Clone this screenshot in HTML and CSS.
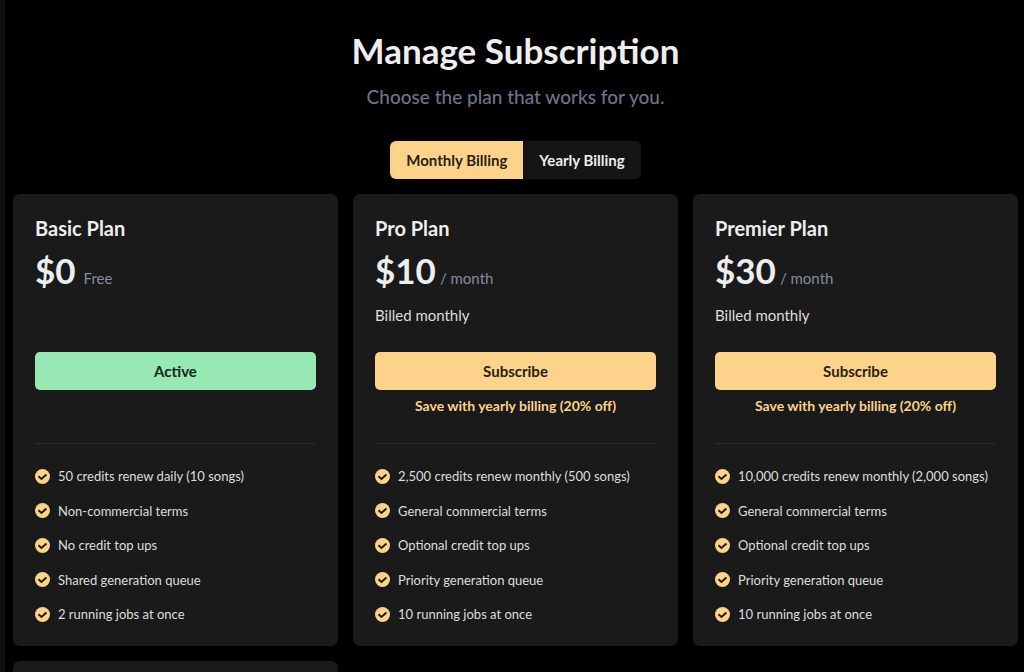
FILE: index.html
```
<!DOCTYPE html>
<html lang="en">
<head>
    <meta charset="UTF-8">
    <meta name="viewport" content="width=device-width, initial-scale=1.0">
    <title>Manage Subscription</title>
    <link rel="stylesheet" href="styles.css">
</head>
<body>
    <svg class="sprite" aria-hidden="true">
        <symbol id="check" viewBox="0 0 16 16">
            <circle cx="8" cy="8" r="8" fill="#fdd28b"/>
            <path d="M3.7 7.8 6.9 10.6 12.2 5.8" fill="none" stroke="#1a1a1a" stroke-width="2"/>
        </symbol>
    </svg>
    <main class="page">
        <header class="header">
            <h1>Manage Subscription</h1>
            <p>Choose the plan that works for you.</p>
            <div class="toggle">
                <button type="button" class="toggle-btn selected" aria-pressed="true">Monthly Billing</button>
                <button type="button" class="toggle-btn" aria-pressed="false">Yearly Billing</button>
            </div>
        </header>

        <div class="plans">
            <section class="card">
                <h2>Basic Plan</h2>
                <p class="price"><strong>$0</strong><span class="free">Free</span></p>
                <p class="billed"></p>
                <button type="button" class="btn btn-active">Active</button>
                <p class="save"></p>
                <ul class="features">
                    <li><svg class="icon"><use href="#check"/></svg>50 credits renew daily (10 songs)</li>
                    <li><svg class="icon"><use href="#check"/></svg>Non-commercial terms</li>
                    <li><svg class="icon"><use href="#check"/></svg>No credit top ups</li>
                    <li><svg class="icon"><use href="#check"/></svg>Shared generation queue</li>
                    <li><svg class="icon"><use href="#check"/></svg>2 running jobs at once</li>
                </ul>
            </section>

            <section class="card">
                <h2>Pro Plan</h2>
                <p class="price"><strong>$10</strong><span>/ month</span></p>
                <p class="billed">Billed monthly</p>
                <button type="button" class="btn">Subscribe</button>
                <p class="save">Save with yearly billing (20% off)</p>
                <ul class="features">
                    <li><svg class="icon"><use href="#check"/></svg>2,500 credits renew monthly (500 songs)</li>
                    <li><svg class="icon"><use href="#check"/></svg>General commercial terms</li>
                    <li><svg class="icon"><use href="#check"/></svg>Optional credit top ups</li>
                    <li><svg class="icon"><use href="#check"/></svg>Priority generation queue</li>
                    <li><svg class="icon"><use href="#check"/></svg>10 running jobs at once</li>
                </ul>
            </section>

            <section class="card">
                <h2>Premier Plan</h2>
                <p class="price"><strong>$30</strong><span>/ month</span></p>
                <p class="billed">Billed monthly</p>
                <button type="button" class="btn">Subscribe</button>
                <p class="save">Save with yearly billing (20% off)</p>
                <ul class="features">
                    <li><svg class="icon"><use href="#check"/></svg>10,000 credits renew monthly (2,000 songs)</li>
                    <li><svg class="icon"><use href="#check"/></svg>General commercial terms</li>
                    <li><svg class="icon"><use href="#check"/></svg>Optional credit top ups</li>
                    <li><svg class="icon"><use href="#check"/></svg>Priority generation queue</li>
                    <li><svg class="icon"><use href="#check"/></svg>10 running jobs at once</li>
                </ul>
            </section>

            <section class="card card-empty"></section>
        </div>
    </main>
</body>
</html>
```
FILE: styles.css
```
* {
    box-sizing: border-box;
}
body {
    margin: 0;
    background: #000;
    color: #eee;
    font-family: Lato, "Liberation Sans", sans-serif;
    font-size: 15px;
    line-height: 20px;
}
h1, h2, p, ul {
    margin: 0;
    padding: 0;
}
button {
    border: 0;
    font-family: inherit;
    cursor: pointer;
}
.sprite {
    display: none;
}
.page {
    height: 100vh;
    overflow: hidden;
    border-left: 5px solid #101010;
    padding: 30px 6px 0 8px;
}
.header {
    display: flex;
    flex-direction: column;
    align-items: center;
    margin-bottom: 15px;
}
.header h1 {
    font-size: 35px;
    font-weight: 700;
    line-height: 40px;
}
.header p {
    margin-top: 15px;
    color: #6b7588;
    font-size: 19px;
    font-weight: 500;
    line-height: 24px;
}
.toggle {
    display: flex;
    margin-top: 32px;
    border-radius: 6px;
    overflow: hidden;
}
.toggle-btn {
    height: 38px;
    padding: 0 16px;
    background: #151515;
    color: #eee;
    font-size: 15px;
    font-weight: 700;
}
.toggle-btn.selected {
    background: #fdd28b;
    color: #2a1f10;
}
.plans {
    display: grid;
    grid-template-columns: repeat(3, minmax(0, 1fr));
    gap: 15px;
}
.card {
    display: flex;
    flex-direction: column;
    padding: 22px;
    border-radius: 7px;
    background: #1a1a1a;
}
.card-empty {
    min-height: 452px;
}
.card h2 {
    font-size: 20px;
    font-weight: 700;
    line-height: 24px;
}
.price {
    display: flex;
    align-items: baseline;
    gap: 4px;
    margin-top: 8px;
    line-height: 20px;
    color: #858c9e;
}
.price strong {
    color: #eee;
    font-size: 35px;
    font-weight: 700;
    line-height: 44px;
}
.price .free {
    margin-left: 4px;
}
.billed {
    height: 24px;
    margin-top: 11px;
    color: #ddd;
    line-height: 24px;
}
.btn {
    height: 38px;
    margin-top: 25px;
    border-radius: 5px;
    background: #fdd28b;
    color: #2a1f10;
    font-size: 15px;
    font-weight: 700;
}
.btn-active {
    background: #98e8b4;
    color: #12291b;
}
.save {
    height: 20px;
    margin: 6px 0 27px;
    color: #fdd28b;
    font-size: 14px;
    font-weight: 700;
    text-align: center;
}
.features {
    display: flex;
    flex-direction: column;
    justify-content: space-between;
    height: 181px;
    padding-top: 22px;
    border-top: 1px solid #2a2a2a;
    list-style: none;
}
.features li {
    display: flex;
    align-items: center;
    gap: 8px;
    color: #ddd;
    font-size: 13px;
    white-space: nowrap;
}
.icon {
    flex: none;
    width: 15px;
    height: 15px;
}
```
